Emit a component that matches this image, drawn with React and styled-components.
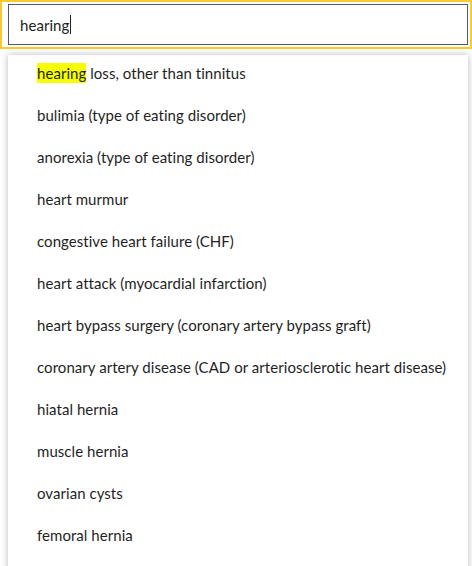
import React from 'react'
import styled, { createGlobalStyle } from 'styled-components'

const GlobalStyle = createGlobalStyle`
  html, body {
    margin: 0;
    padding: 0;
    background: #fff;
    overflow: hidden;
  }
  body {
    font-family: Lato, "Liberation Sans", sans-serif;
    font-variant-ligatures: none;
    color: #222;
  }
`

const items = [
  'hearing loss, other than tinnitus',
  'bulimia (type of eating disorder)',
  'anorexia (type of eating disorder)',
  'heart murmur',
  'congestive heart failure (CHF)',
  'heart attack (myocardial infarction)',
  'heart bypass surgery (coronary artery bypass graft)',
  'coronary artery disease (CAD or arteriosclerotic heart disease)',
  'hiatal hernia',
  'muscle hernia',
  'ovarian cysts',
  'femoral hernia',
]

const Highlighted = ({ text, query }) => {
  const idx = text.toLowerCase().indexOf(query.toLowerCase())
  if (idx === -1) return text
  return (
    <>
      {text.slice(0, idx)}
      <Mark>{text.slice(idx, idx + query.length)}</Mark>
      {text.slice(idx + query.length)}
    </>
  )
}

const App = () => {
  const query = 'hearing'
  return (
    <>
      <GlobalStyle />
      <Wrapper>
        <SearchFrame>
          <Input>
            {query}
            <Caret />
          </Input>
        </SearchFrame>
        <Dropdown>
          {items.map((item) => (
            <Option key={item}>
              <Highlighted text={item} query={query} />
            </Option>
          ))}
        </Dropdown>
      </Wrapper>
    </>
  )
}

const Wrapper = styled.div`
  width: 472px;
  height: 566px;
  overflow: hidden;
`

const SearchFrame = styled.div`
  border: 2px solid #fcc92f;
  padding: 2px 2px 2px 6px;
`

const Input = styled.div`
  height: 39px;
  border: 1px solid #545863;
  padding-left: 11px;
  display: flex;
  align-items: center;
  font-size: 15px;
  letter-spacing: 0.05px;
  color: #222;
`

const Caret = styled.span`
  display: inline-block;
  width: 1px;
  height: 19px;
  background: #222;
  margin-left: 1px;
`

const Dropdown = styled.ul`
  list-style: none;
  margin: 6px 4px 0 8px;
  padding: 0 0 40px;
  background: #fff;
  box-shadow: 0 0 7px rgba(0, 0, 0, 0.28);
`

const Option = styled.li`
  padding: 8px 20px 14px 29px;
  line-height: 20px;
  font-size: 15px;
  letter-spacing: 0.05px;
  white-space: nowrap;
  color: #1f1f1f;
`

const Mark = styled.mark`
  background: #f6ff00;
  color: inherit;
  padding: 1px 0;
`

export default App
